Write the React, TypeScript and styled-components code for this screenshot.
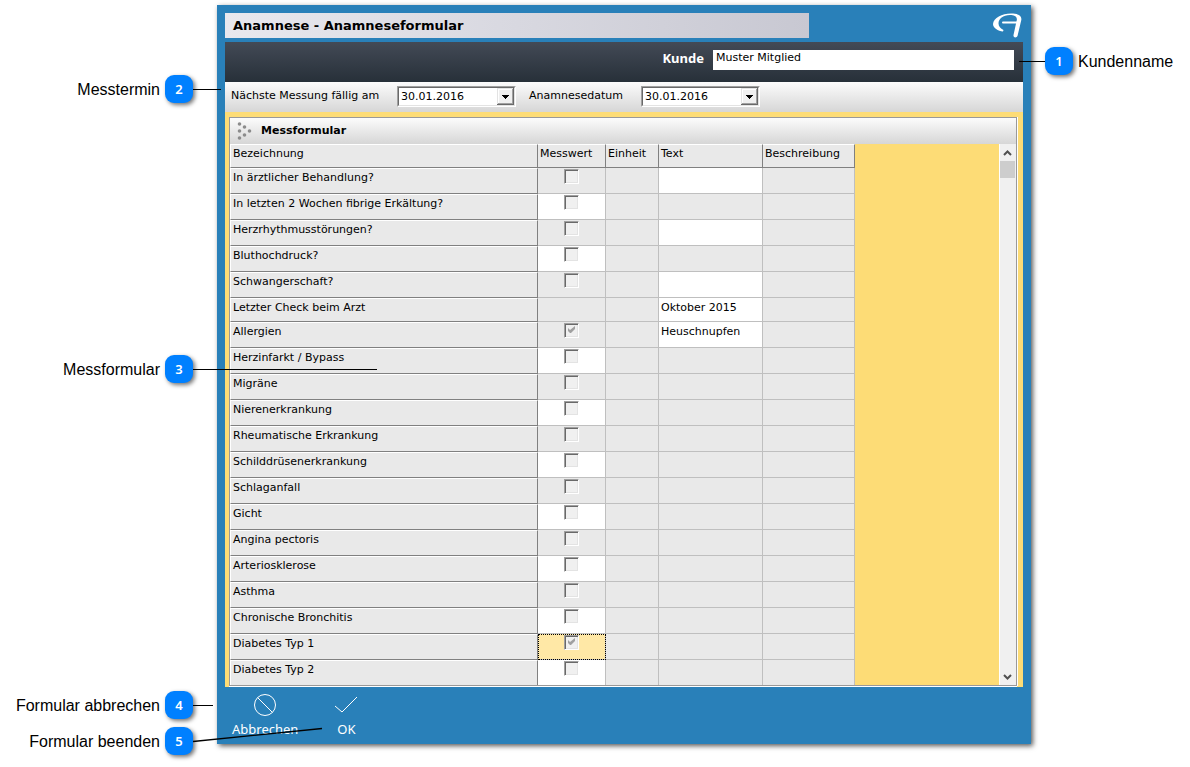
import React from 'react';
import styled, { createGlobalStyle, css } from 'styled-components';

const Global = createGlobalStyle`
  *, *::before, *::after { box-sizing: border-box; }
  body { margin: 0; background: #fff; }
  input, select, button { font: inherit; color: inherit; margin: 0; }
`;

const ui = "'DejaVu Sans', Verdana, sans-serif";
const blue = '#2980b9';
const sand = '#fddc76';
const face = '#e9e9e9';

const Page = styled.div`
  display: grid;
  grid-template-columns: 217px minmax(0, 1fr) 159px;
  padding: 5px 0 23px;
  font: 11px/14px ${ui};
  color: #000;
`;

const Rail = styled.aside`
  position: relative;
  z-index: 1;
`;

const Callout = styled.div<{ $top: number; $side: 'left' | 'right' }>`
  position: absolute;
  top: ${(p) => p.$top}px;
  display: flex;
  align-items: center;
  gap: 5px;
  height: 28px;
  white-space: nowrap;
  font: 16px/30px 'Liberation Sans', Arial, sans-serif;
  ${(p) =>
    p.$side === 'left'
      ? css`
          right: 24px;
        `
      : css`
          left: 14px;
          flex-direction: row-reverse;
        `}
`;

const CalloutText = styled.span`
  padding-top: 1px;
`;

const Badge = styled.span`
  width: 28px;
  height: 28px;
  border-radius: 9px;
  background: #0080ff;
  color: #fff;
  text-align: center;
  font: 600 13px/28px 'Noto Sans', sans-serif;
  box-shadow: 2px 2px 4px rgba(0, 0, 0, 0.55);
`;

const Leader = styled.svg<{ $side: 'left' | 'right' }>`
  position: absolute;
  top: 0;
  ${(p) => (p.$side === 'left' ? 'left: 100%;' : 'right: 100%;')}
  overflow: visible;
  pointer-events: none;
`;

const Window = styled.main`
  background: ${blue};
  padding: 8px 8px 0;
  box-shadow: 2px 2px 5px rgba(0, 0, 0, 0.65);
`;

const TitleRow = styled.header`
  display: flex;
  justify-content: space-between;
  height: 29px;
`;

const Title = styled.h1`
  margin: 0;
  width: 584px;
  height: 25px;
  padding-left: 8px;
  font-size: 13px;
  line-height: 25px;
  background: linear-gradient(90deg, #e8e8ee, #c8c8d2);
`;

const Logo = styled.svg`
  flex: none;
`;

const CustomerBar = styled.section`
  display: flex;
  justify-content: flex-end;
  height: 40px;
  padding: 8px 9px 0 0;
  gap: 9px;
  background: linear-gradient(#434a56, #273039);
`;

const CustomerLabel = styled.label`
  color: #fff;
  font: 700 13px/16px 'Noto Sans', sans-serif;
`;

const CustomerInput = styled.input`
  width: 301px;
  height: 20px;
  border: 0;
  padding: 0 3px 5px;
  background: #fff;
`;

const DateBar = styled.section`
  display: flex;
  align-items: flex-start;
  height: 30px;
  padding: 4px 6px 0;
  background: linear-gradient(#fcfcfc, #d6d6d6);
`;

const DateField = styled.div`
  display: flex;
  margin-right: 13px;
`;

const DateLabel = styled.label<{ $width: number }>`
  width: ${(p) => p.$width}px;
  line-height: 20px;
`;

const Combo = styled.span`
  position: relative;
  width: 119px;
  height: 21px;
  border: 1px solid;
  border-color: #a0a0a0 #fff #fff #a0a0a0;

  select {
    appearance: none;
    display: block;
    width: 100%;
    height: 19px;
    padding: 1px 18px 0 2px;
    border: 1px solid;
    border-color: #696969 #e3e3e3 #e3e3e3 #696969;
    border-radius: 0;
    background: #fff;
    outline: none;
  }
`;

const ComboArrow = styled.svg`
  position: absolute;
  top: 1px;
  right: 1px;
  pointer-events: none;
`;

const Body = styled.section`
  padding: 5px 6px 0 4px;
  background: ${sand};
`;

const Panel = styled.div`
  border: 1px solid #999;
  box-shadow: 1px 0 0 #fff;
`;

const PanelEdge = styled.div`
  border-bottom: 1px solid #fff;
`;

const PanelHead = styled.div`
  display: flex;
  align-items: center;
  gap: 9px;
  height: 26px;
  padding-left: 7px;
  background: linear-gradient(#fcfcfc, #d6d6d6);

  h2 {
    margin: 0;
    font-size: 11px;
    line-height: 26px;
  }
`;

const GridArea = styled.div`
  display: flex;
  justify-content: space-between;
`;

const Grid = styled.table`
  width: 625px;
  table-layout: fixed;
  border-collapse: separate;
  border-spacing: 0;
`;

const HeadCell = styled.th`
  height: 24px;
  padding: 2px 2px 0;
  text-align: left;
  vertical-align: top;
  font-weight: 400;
  background: ${face};
  border-top: 1px solid #fff;
  border-right: 1px solid #808080;
  border-bottom: 1px solid #808080;

  &:first-child {
    border-left: 1px solid #fff;
  }
`;

const NameCell = styled.th`
  padding: 2px 2px 0;
  text-align: left;
  vertical-align: top;
  font-weight: 400;
  background: ${face};
  border: 1px solid;
  border-color: #fff #808080 #808080 #fff;
`;

const Cell = styled.td<{ $open?: boolean }>`
  padding: 0;
  vertical-align: top;
  background: ${(p) => (p.$open ? '#fff' : face)};
  border-right: 1px solid #bfbfbf;
  border-bottom: 1px solid #bfbfbf;
`;

const ValueCell = styled(Cell)<{ $focus?: boolean }>`
  padding-top: 1px;
  text-align: center;
  line-height: 0;
  ${(p) =>
    p.$focus &&
    css`
      background: #ffe8a6;
      outline: 1px dotted #000;
      outline-offset: -1px;
    `}
`;

const Row = styled.tr<{ $short?: boolean }>`
  & > * {
    height: ${(p) => (p.$short ? 24 : 26)}px;
  }
  &:last-child > * {
    height: 25px;
    border-bottom: 0;
  }
`;

const Tick = styled.input`
  appearance: none;
  width: 15px;
  height: 15px;
  border: 1px solid;
  border-color: #a0a0a0 #fff #fff #a0a0a0;
  background: #f0f0f0;
  box-shadow: inset 1px 1px 0 #696969, inset -1px -1px 0 #e3e3e3;

  &:checked {
    background: #f0f0f0
      url("data:image/svg+xml,%3Csvg xmlns='http://www.w3.org/2000/svg' width='13' height='13'%3E%3Cpath d='M3 4v3l2 2h1l4-4V2L5 6z' fill='%23a0a0a0'/%3E%3C/svg%3E");
  }
`;

const CellInput = styled.input`
  display: block;
  width: 100%;
  height: 18px;
  padding: 0 2px;
  border: 0;
  background: transparent;
  outline: none;
`;

const ScrollTrack = styled.div`
  display: flex;
  flex-direction: column;
  width: 17px;
  border-left: 1px solid #fff;
  background: #f0f0f0;
`;

const ScrollButton = styled.button`
  display: block;
  height: 17px;
  padding: 0;
  border: 0;
  background: transparent;

  svg {
    display: block;
  }
`;

const ScrollThumb = styled.div`
  height: 17px;
  margin: 0 1px auto 0;
  background: #cdcdcd;
`;

const Footer = styled.footer`
  display: flex;
  gap: 36px;
  height: 57px;
  padding: 6px 7px 0;
`;

const Action = styled.button`
  display: flex;
  flex-direction: column;
  align-items: center;
  gap: 3px;
  height: 45px;
  padding: 0;
  border: 0;
  background: none;
  color: #fff;
  font: 13px/18px 'Noto Sans', 'Segoe UI', sans-serif;
`;

type Entry = {
  name: string;
  check?: boolean;
  checked?: boolean;
  openValue?: boolean;
  text?: string;
  focus?: boolean;
};

const entries: Entry[] = [
  { name: 'In ärztlicher Behandlung?', check: true, text: '' },
  { name: 'In letzten 2 Wochen fibrige Erkältung?', check: true, openValue: true },
  { name: 'Herzrhythmusstörungen?', check: true, text: '' },
  { name: 'Bluthochdruck?', check: true, openValue: true },
  { name: 'Schwangerschaft?', check: true, text: '' },
  { name: 'Letzter Check beim Arzt', text: 'Oktober 2015' },
  { name: 'Allergien', check: true, checked: true, text: 'Heuschnupfen' },
  { name: 'Herzinfarkt / Bypass', check: true, openValue: true },
  { name: 'Migräne', check: true },
  { name: 'Nierenerkrankung', check: true, openValue: true },
  { name: 'Rheumatische Erkrankung', check: true },
  { name: 'Schilddrüsenerkrankung', check: true, openValue: true },
  { name: 'Schlaganfall', check: true },
  { name: 'Gicht', check: true, openValue: true },
  { name: 'Angina pectoris', check: true },
  { name: 'Arteriosklerose', check: true, openValue: true },
  { name: 'Asthma', check: true },
  { name: 'Chronische Bronchitis', check: true, openValue: true },
  { name: 'Diabetes Typ 1', check: true, checked: true, focus: true },
  { name: 'Diabetes Typ 2', check: true, openValue: true },
];

function DatePicker({ id, label, width }: { id: string; label: string; width: number }) {
  return (
    <DateField>
      <DateLabel htmlFor={id} $width={width}>
        {label}
      </DateLabel>
      <Combo>
        <select id={id}>
          <option>30.01.2016</option>
        </select>
        <ComboArrow width="17" height="17">
          <path d="M0 0h17v17H0z" fill="#696969" />
          <path d="M0 0h16v16H0z" fill="#e3e3e3" />
          <path d="M1 1h15v15H1z" fill="#a0a0a0" />
          <path d="M1 1h14v14H1z" fill="#fff" />
          <path d="M2 2h13v13H2z" fill="#f0f0f0" />
          <path d="M5 7h7v1h-1v1h-1v1H9v1H8v-1H7V9H6V8H5z" fill="#000" />
        </ComboArrow>
      </Combo>
    </DateField>
  );
}

type NoteProps = { n: number; top: number; text: string; side?: 'left' | 'right'; dx: number; dy?: number };

function Note({ n, top, text, side = 'left', dx, dy = 0 }: NoteProps) {
  return (
    <Callout $top={top} $side={side}>
      <CalloutText>{text}</CalloutText>
      <Badge>{n}</Badge>
      <Leader $side={side} width={dx} height="28">
        <line
          x1="0"
          y1="14.5"
          x2={dx}
          y2={14.5 + dy}
          stroke="#000"
          strokeWidth={dy ? 1.3 : 1}
        />
      </Leader>
    </Callout>
  );
}

export default function App() {
  return (
    <>
      <Global />
      <Page>
        <Rail>
          <Note n={2} top={70} text="Messtermin" dx={28} />
          <Note n={3} top={350} text="Messformular" dx={184} />
          <Note n={4} top={686} text="Formular abbrechen" dx={20} />
          <Note n={5} top={722} text="Formular beenden" dx={129} dy={-13} />
        </Rail>

        <Window>
          <TitleRow>
            <Title>Anamnese - Anamneseformular</Title>
            <Logo width="31" height="27" viewBox="0 0 31 27" fill="#fff">
              <path d="M11 18.500C6 18 1 15 1 11C1.500 5 10 .5 19 .5C26 .5 30 2.500 29.300 7L25.500 23C24.800 25 21 25 21.500 22L24.800 7C25.500 3.500 22 2 18 2C11 2 6.500 6 6.500 10.500C6.500 13.500 8.500 15.500 11.500 17Z" />
              <path d="M10 9.500Q10 8.500 11 8.500H26.500V10.500H11Q10 10.500 10 9.500Z" />
            </Logo>
          </TitleRow>

          <CustomerBar>
            <CustomerLabel htmlFor="kunde">Kunde</CustomerLabel>
            <CustomerInput id="kunde" defaultValue="Muster Mitglied" />
          </CustomerBar>

          <DateBar>
            <DatePicker id="naechste" label="Nächste Messung fällig am" width={166} />
            <DatePicker id="datum" label="Anamnesedatum" width={112} />
          </DateBar>

          <Body>
            <PanelEdge>
              <Panel>
                <PanelHead>
                  <svg width="15" height="20" viewBox="0 0 15 20" fill="#8c8c8c">
                    <circle cx="2.500" cy="3" r="1.800" />
                    <circle cx="7.500" cy="6" r="1.800" />
                    <circle cx="2.500" cy="10" r="1.800" />
                    <circle cx="12.500" cy="10" r="1.800" />
                    <circle cx="7.500" cy="14" r="1.800" />
                    <circle cx="2.500" cy="17" r="1.800" />
                  </svg>
                  <h2>Messformular</h2>
                </PanelHead>
                <GridArea>
                  <Grid>
                    <colgroup>
                      <col width="308" />
                      <col width="68" />
                      <col width="53" />
                      <col width="104" />
                      <col width="92" />
                    </colgroup>
                    <thead>
                      <tr>
                        {['Bezeichnung', 'Messwert', 'Einheit', 'Text', 'Beschreibung'].map((h) => (
                          <HeadCell key={h} scope="col">
                            {h}
                          </HeadCell>
                        ))}
                      </tr>
                    </thead>
                    <tbody>
                      {entries.map((e) => (
                        <Row key={e.name} $short={!e.check}>
                          <NameCell scope="row">{e.name}</NameCell>
                          <ValueCell $open={e.openValue} $focus={e.focus}>
                            {e.check && (
                              <Tick type="checkbox" aria-label={e.name} defaultChecked={e.checked} />
                            )}
                          </ValueCell>
                          <Cell />
                          <Cell $open={e.text !== undefined}>
                            {e.text !== undefined && (
                              <CellInput aria-label={`${e.name} Text`} defaultValue={e.text} />
                            )}
                          </Cell>
                          <Cell />
                        </Row>
                      ))}
                    </tbody>
                  </Grid>
                  <ScrollTrack>
                    <ScrollButton aria-label="Nach oben">
                      <svg width="16" height="17" fill="none" stroke="#505050" strokeWidth="2">
                        <path d="M4 11L7.500 7.500L11 11" />
                      </svg>
                    </ScrollButton>
                    <ScrollThumb />
                    <ScrollButton aria-label="Nach unten">
                      <svg width="16" height="17" fill="none" stroke="#505050" strokeWidth="2">
                        <path d="M4 7L7.500 10.500L11 7" />
                      </svg>
                    </ScrollButton>
                  </ScrollTrack>
                </GridArea>
              </Panel>
            </PanelEdge>
          </Body>

          <Footer>
            <Action>
              <svg width="24" height="24" fill="none" stroke="#fff">
                <circle cx="12" cy="12" r="10.500" />
                <path d="M4.500 4.500L19.500 19.500" />
              </svg>
              Abbrechen
            </Action>
            <Action>
              <svg width="24" height="24" fill="none" stroke="#fff">
                <path d="M1 13L8 19L23 4" />
              </svg>
              OK
            </Action>
          </Footer>
        </Window>

        <Rail>
          <Note n={1} top={42} text="Kundenname" side="right" dx={26} />
        </Rail>
      </Page>
    </>
  );
}
